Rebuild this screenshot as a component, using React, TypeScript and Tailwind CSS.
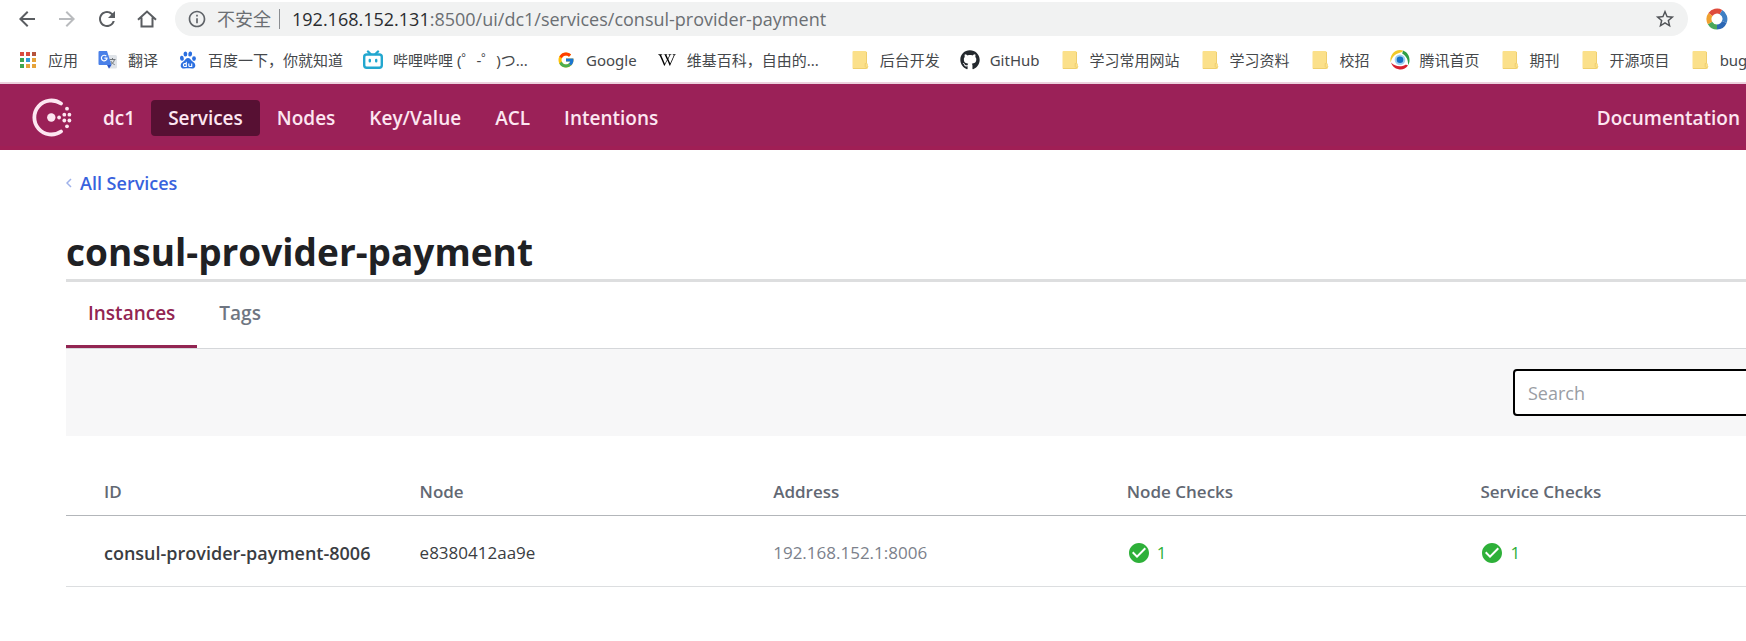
import type { ReactNode } from 'react'
import { FaGithub, FaWikipediaW } from 'react-icons/fa'
import { FcGoogle } from 'react-icons/fc'
import {
  MdArrowBack,
  MdArrowForward,
  MdCheckCircle,
  MdInfoOutline,
  MdRefresh,
  MdStarBorder,
} from 'react-icons/md'

function HomeIcon() {
  return (
    <svg viewBox="0 0 24 24" className="size-6" fill="none" stroke="currentColor" strokeWidth="2">
      <path d="M3 12.700L12 4.500l9 8.200M6.500 10.500V19.500h11V10.500" />
    </svg>
  )
}

function AppsIcon() {
  const colors = ['#d94b3f', '#d94b3f', '#b5533c', '#3fa650', '#2f9bd8', '#e6a33a', '#3fa650', '#e6a33a', '#e6a33a']
  return (
    <svg viewBox="0 0 20 20" className="size-5">
      {colors.map((color, i) => (
        <rect key={i} x={2 + (i % 3) * 6} y={2 + Math.floor(i / 3) * 6} width="4" height="4" fill={color} />
      ))}
    </svg>
  )
}

function TranslateIcon() {
  return (
    <svg viewBox="0 0 20 20" className="size-5">
      <path d="M8 5h9.500a1.500 1.500 0 0 1 1.500 1.500v10.500a1.500 1.500 0 0 1-1.500 1.500H12z" fill="#dfe3e8" />
      <path d="M11.500 9.500h6M14.500 8v1.500M16.500 9.500c-.6 2.500-2 4-4 5.200M12.800 11c.8 1.600 2 2.700 3.900 3.700" stroke="#70757a" fill="none" />
      <path d="M1.500 1H9l4.500 14H1.500A1 1 0 0 1 .5 14V2a1 1 0 0 1 1-1z" fill="#4a80e8" />
      <path d="M9 15h4.500L11 18.800z" fill="#2a56c6" />
      <path d="M8.300 6.200A2.800 2.800 0 1 0 9 8.200H6.400" stroke="#fff" strokeWidth="1.200" fill="none" />
    </svg>
  )
}

function BaiduIcon() {
  return (
    <svg viewBox="0 0 20 20" className="size-5" fill="#2b6fe0">
      <ellipse cx="3.900" cy="8.300" rx="1.900" ry="2.500" transform="rotate(-12 3.900 8.300)" />
      <ellipse cx="7.400" cy="4" rx="1.900" ry="2.600" />
      <ellipse cx="12.200" cy="4" rx="1.900" ry="2.600" transform="rotate(10 12.200 4)" />
      <ellipse cx="16" cy="8.600" rx="1.900" ry="2.400" />
      <path d="M10 8c2 0 2.600 1.700 4 3.100 1.500 1.300 3.300 2.200 3.300 4.300 0 2.400-2 3.400-3.600 3.100-1.500-.2-2.400-.3-3.700-.3s-2.200.1-3.700.3c-1.700.3-3.600-.7-3.600-3.100 0-2.100 1.800-3 3.300-4.300C7.400 9.700 8 8 10 8z" />
      <path d="M8.300 11.800v4.700H6.700c-1.800 0-1.800-2.900 0-2.900h1.600M10.800 13.500v2c0 .8.300 1 1 1h1.900v-3" fill="none" stroke="#fff" strokeWidth="1.100" />
    </svg>
  )
}

function BilibiliIcon() {
  return (
    <svg viewBox="0 0 20 20" className="size-5" fill="none" stroke="#22a7cf" strokeWidth="2.400" strokeLinecap="round">
      <rect x="1.200" y="4.500" width="17.600" height="13.300" rx="2.500" />
      <path d="M5 1.500l2.500 2.500M15 1.500L12.500 4M6.800 10v1.200M13.200 10v1.200" />
    </svg>
  )
}

function FolderIcon() {
  return (
    <svg viewBox="0 0 20 20" className="size-5">
      <path d="M3.500 1h12a1 1 0 0 1 1 1v11.500h1a.5.500 0 0 1 .5.500v3.500a1.500 1.500 0 0 1-1.500 1.500h-13a1 1 0 0 1-1-1V2a1 1 0 0 1 1-1z" fill="#fbe08a" />
      <path d="M3 18.500h13.500M16.500 2v11.500h-1.300v3a1.500 1.500 0 0 0 2.800 0" fill="none" stroke="#efcf6e" />
    </svg>
  )
}

function TencentIcon() {
  return (
    <svg viewBox="0 0 20 20" className="size-5">
      <path d="M10 0A9.800 9.800 0 0 0 .8 12.500C1.500 8 4.500 4 10.500 2.600 12 2.200 13 1.500 13 .5A9 9 0 0 0 10 0z" fill="#f0c92b" />
      <path d="M13 .5c4 1.400 7 5.500 6.500 10.500-.1 1.700-.7 3-1.500 4 .4-4.600-1.200-8.700-6-11.800C12.600 2.600 13 1.500 13 .5z" fill="#2f9e44" />
      <path d="M1 12.500c4 4 9.500 5 14.500 2.300 1 0 2 .2 2.500.7A9.700 9.700 0 0 1 1 12.500z" fill="#d8202f" />
      <circle cx="10" cy="9.700" r="5.300" fill="#9fd0f2" />
      <circle cx="10" cy="9.700" r="3.300" fill="#1470c4" />
    </svg>
  )
}

function ProfileRing() {
  return (
    <svg viewBox="0 0 22 22" className="size-[22px]" fill="none" strokeWidth="5">
      <path d="M4.500 6.500A8 8 0 0 1 15 4.100" stroke="#de4b3c" />
      <path d="M15 4.100A8 8 0 0 1 18.300 14" stroke="#3f7fc4" />
      <path d="M18.300 14A8 8 0 0 1 11 19" stroke="#2c68b5" />
      <path d="M11 19a8 8 0 0 1-7-4" stroke="#4aa75a" />
      <path d="M4 15a8 8 0 0 1 .5-8.500" stroke="#f0a02f" />
    </svg>
  )
}

function ConsulLogo() {
  const dots = [
    [27.100, 19.500], [32.300, 16.700], [32.300, 22.500], [35, 10.700],
    [37.400, 16.700], [37.400, 22.500], [35, 28.300],
  ]
  return (
    <svg viewBox="0 0 40 40" className="size-10" fill="#fde6f1">
      <path d="M29 5.500A17 17 0 1 0 29 33.500" fill="none" stroke="#fde6f1" strokeWidth="3.800" strokeLinecap="round" />
      <circle cx="19.300" cy="19.500" r="4.200" />
      {dots.map(([x, y]) => (
        <circle key={`${x}-${y}`} cx={x} cy={y} r="1.900" />
      ))}
    </svg>
  )
}

const bookmarks: { icon: ReactNode; label: string }[] = [
  { icon: <AppsIcon />, label: '应用' },
  { icon: <TranslateIcon />, label: '翻译' },
  { icon: <BaiduIcon />, label: '百度一下，你就知道' },
  { icon: <BilibiliIcon />, label: '哔哩哔哩 (゜-゜)つ...' },
  { icon: <FcGoogle className="size-[18px]" />, label: 'Google' },
  { icon: <FaWikipediaW className="size-[18px] text-black" />, label: '维基百科，自由的...' },
  { icon: <FolderIcon />, label: '后台开发' },
  { icon: <FaGithub className="size-5 text-[#24292e]" />, label: 'GitHub' },
  { icon: <FolderIcon />, label: '学习常用网站' },
  { icon: <FolderIcon />, label: '学习资料' },
  { icon: <FolderIcon />, label: '校招' },
  { icon: <TencentIcon />, label: '腾讯首页' },
  { icon: <FolderIcon />, label: '期刊' },
  { icon: <FolderIcon />, label: '开源项目' },
  { icon: <FolderIcon />, label: 'bug' },
]

function BrowserBar() {
  return (
    <div className="overflow-hidden border-b-2 border-[#ecd0dd] bg-white">
      <div className="flex items-center pt-0.5 pr-[18px] pl-[15px]">
        <div className="flex gap-4 text-[#5a5d61]">
          <button aria-label="Back"><MdArrowBack className="size-6" /></button>
          <button aria-label="Forward" className="text-[#b9bbbe]"><MdArrowForward className="size-6" /></button>
          <button aria-label="Reload"><MdRefresh className="size-6" /></button>
          <button aria-label="Home"><HomeIcon /></button>
        </div>
        <div className="ml-4 flex h-[34px] flex-1 items-center rounded-full bg-[#f1f2f2] pr-3 pl-3">
          <MdInfoOutline className="size-5 text-[#5f6368]" />
          <span className="ml-2.5 text-lg text-[#6b6f73]">不安全</span>
          <span className="mr-3 ml-2 h-5 w-px bg-[#8a8d91]" />
          <span className="flex-1 text-lg whitespace-nowrap text-[#6b6f73]">
            <span className="text-[#2a2c2f]">192.168.152.131</span>:8500/ui/dc1/services/consul-provider-payment
          </span>
          <button aria-label="Bookmark this page"><MdStarBorder className="size-[22px] text-[#505357]" /></button>
        </div>
        <button aria-label="Extension" className="ml-[18px]"><ProfileRing /></button>
      </div>
      <nav
        aria-label="Bookmarks"
        className="flex h-[46px] items-center gap-5 pt-0.5 pl-[18px] font-['Noto_Sans','Noto_Sans_CJK_SC',sans-serif]"
      >
        {bookmarks.map(({ icon, label }, i) => (
          <a key={i} href="#" className="flex shrink-0 items-center gap-2.5 text-[15px] whitespace-nowrap text-[#45484b]">
            <span className="flex size-5 items-center justify-center">{icon}</span>
            <span className={label.endsWith('...') ? 'w-[143px]' : undefined}>{label}</span>
          </a>
        ))}
      </nav>
    </div>
  )
}

const navItems = ['Services', 'Nodes', 'Key/Value', 'ACL', 'Intentions']

function ConsulHeader() {
  return (
    <header className="flex h-[66px] items-center border-b-4 border-[#a01f55] bg-[#9b2158] pt-1.5 pr-1.5 pl-8 text-[19px] font-semibold text-[#fde6f1]">
      <a href="#" aria-label="Consul"><ConsulLogo /></a>
      <nav className="ml-[15px] flex items-center">
        <a href="#" className="px-4">dc1</a>
        {navItems.map((item, i) => (
          <a
            key={item}
            href="#"
            className={i === 0 ? 'rounded bg-[#571033] px-[17px] py-1' : 'px-[17px] py-1'}
          >
            {item}
          </a>
        ))}
      </nav>
      <a href="#" className="ml-auto">Documentation</a>
    </header>
  )
}

function Check() {
  return (
    <span className="flex items-center gap-1.5 text-[#2eb039]">
      <MdCheckCircle className="size-6" />1
    </span>
  )
}

export default function App() {
  return (
    <div className="overflow-hidden bg-white font-['Open_Sans','Noto_Sans_CJK_SC',sans-serif]">
      <BrowserBar />
      <ConsulHeader />
      {/* the page is wider than the window, so its right side runs off the edge */}
      <main className="-mr-[88px] ml-[66px]">
        <a href="#" className="flex items-center gap-2 pt-[19px] text-lg font-semibold text-[#3862dd]">
          <svg viewBox="0 0 6 10" className="h-2.5 w-1.5" fill="none" stroke="#9fb2ea" strokeWidth="1.500">
            <path d="M5 1L1 5l4 4" />
          </svg>
          All Services
        </a>
        <h1 className="mt-7 border-b-[3px] border-[#dddedf] text-[37px] leading-[54px] font-bold text-[#1f2124]">
          consul-provider-payment
        </h1>
        <div role="tablist" className="flex border-b border-[#d5d7da] text-[19px] font-semibold">
          <button role="tab" aria-selected="true" className="h-[66px] border-b-[3px] border-[#922552] px-[22px] text-[#922552]">
            Instances
          </button>
          <button role="tab" aria-selected="false" className="h-[66px] border-b-[3px] border-transparent px-[22px] text-[#6f7682]">
            Tags
          </button>
        </div>
        <div className="flex justify-end bg-[#f7f7f8] py-5">
          <input
            type="search"
            aria-label="Search"
            placeholder="Search"
            className="h-[47px] w-[321px] rounded border-2 border-black bg-white px-[13px] text-lg placeholder:text-[#9a9da4]"
          />
        </div>
        <table className="mt-8 w-full table-fixed text-left text-[17px]">
          <thead>
            <tr className="h-[47px] border-b border-[#b3b6ba] text-[#626873]">
              <th className="pl-[38px] font-semibold">ID</th>
              <th className="font-semibold">Node</th>
              <th className="font-semibold">Address</th>
              <th className="font-semibold">Node Checks</th>
              <th className="font-semibold">Service Checks</th>
            </tr>
          </thead>
          <tbody>
            <tr className="h-[71px] border-b border-[#dcdee0] text-[#3a3d42]">
              <td className="pt-1 pl-[38px] text-lg font-semibold">
                <a href="#">consul-provider-payment-8006</a>
              </td>
              <td className="pt-1">e8380412aa9e</td>
              <td className="pt-1 text-[#7c818b]">192.168.152.1:8006</td>
              <td className="pt-1"><Check /></td>
              <td className="pt-1"><Check /></td>
            </tr>
          </tbody>
        </table>
      </main>
    </div>
  )
}
